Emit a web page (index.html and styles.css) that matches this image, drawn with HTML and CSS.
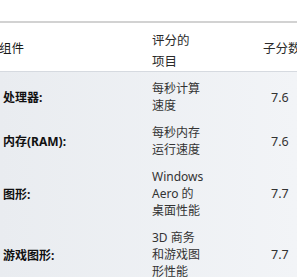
FILE: index.html
```html
<!DOCTYPE html>
<html lang="zh-CN">
<head>
<meta charset="utf-8">
<link rel="stylesheet" href="styles.css">
</head>
<body>
<div class="page">
  <div class="topgap"></div>
  <div class="head">
    <div class="h1">组件</div>
    <div class="h2">评分的<br>项目</div>
    <div class="h3">子分数</div>
  </div>
  <div class="rows">
    <div class="row">
      <div class="label">处理器:</div>
      <div class="desc">每秒计算<br>速度</div>
      <div class="num">7.6</div>
    </div>
    <div class="row">
      <div class="label">内存(RAM):</div>
      <div class="desc">每秒内存<br>运行速度</div>
      <div class="num">7.6</div>
    </div>
    <div class="row">
      <div class="label">图形:</div>
      <div class="desc">Windows<br>Aero 的<br>桌面性能</div>
      <div class="num">7.7</div>
    </div>
    <div class="row">
      <div class="label">游戏图形:</div>
      <div class="desc">3D 商务<br>和游戏图<br>形性能</div>
      <div class="num">7.7</div>
    </div>
  </div>
</div>
</body>
</html>
```
FILE: styles.css
```css
html, body {
  margin: 0;
  padding: 0;
  background: #ffffff;
}
.page {
  width: 297px;
  height: 277px;
  overflow: hidden;
  font-family: "Noto Sans", "Noto Sans CJK SC", sans-serif;
  font-size: 12px;
  color: #222;
  background: linear-gradient(to right, #e9ecf0, #f2f4f7);
}
.topgap {
  height: 21px;
  background: #ffffff;
  border-bottom: 2px solid #d2d2d2;
}
.head {
  height: 48px;
  background: #ffffff;
  border-bottom: 1px solid #d6dae0;
  display: grid;
  grid-template-columns: 152px 111px 1fr;
  align-items: center;
  white-space: nowrap;
  color: #1a1a1a;
  font-family: "Noto Sans CJK SC", sans-serif;
  font-size: 12.5px;
}
.h1 {
  padding-left: 0;
  margin-left: -1px;
}
.h2 {
  align-self: start;
  padding-top: 6px;
  line-height: 21px;
  color: #2a2a2a;
}
.h3 {
  color: #2a2a2a;
}
.rows {
  padding-top: 3px;
}
.row {
  display: grid;
  grid-template-columns: 152px 111px 1fr;
  align-items: center;
  padding: 5px 0;
}
.label {
  padding-left: 3px;
  font-weight: bold;
  color: #111;
  font-family: "Noto Sans", "Noto Sans CJK SC", sans-serif;
  font-size: 12px;
}
.desc {
  line-height: 17px;
  color: #333;
  white-space: nowrap;
}
.num {
  padding-left: 8px;
  color: #333;
  font-size: 12.5px;
}
```
